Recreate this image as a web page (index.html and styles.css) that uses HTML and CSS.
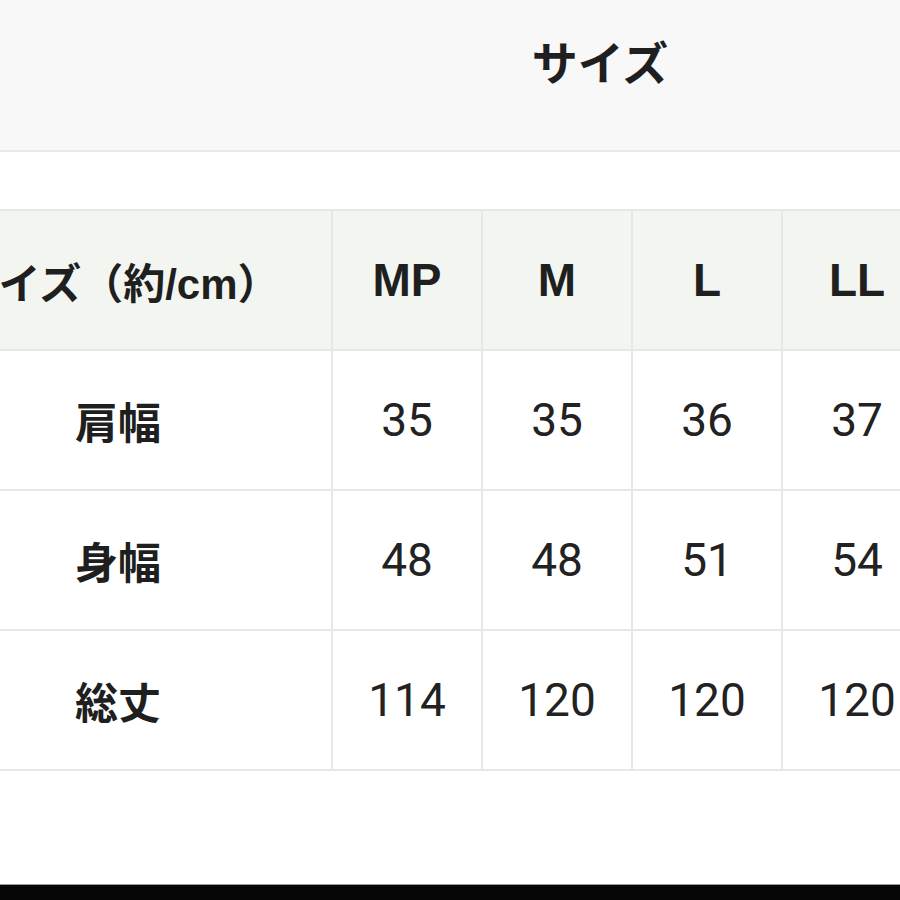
FILE: index.html
```html
<!DOCTYPE html>
<html lang="ja">
<head>
<meta charset="utf-8">
<link rel="stylesheet" href="styles.css">
</head>
<body>
<div class="page">
  <div class="title-bar"><span class="title">サイズ</span></div>
  <div class="table-wrap">
    <table class="size-table">
      <colgroup>
        <col class="c-label"><col class="c-size"><col class="c-size"><col class="c-size"><col class="c-size">
      </colgroup>
      <thead>
        <tr>
          <th class="label-head">サイズ（約/cm）</th>
          <th>MP</th><th>M</th><th>L</th><th>LL</th>
        </tr>
      </thead>
      <tbody>
        <tr><td class="label">肩幅</td><td>35</td><td>35</td><td>36</td><td>37</td></tr>
        <tr><td class="label">身幅</td><td>48</td><td>48</td><td>51</td><td>54</td></tr>
        <tr><td class="label">総丈</td><td>114</td><td>120</td><td>120</td><td>120</td></tr>
      </tbody>
    </table>
  </div>
  <div class="bottom-bar"></div>
</div>
</body>
</html>
```
FILE: styles.css
```css
html, body {
  margin: 0;
  padding: 0;
  background: #ffffff;
  overflow: hidden;
}
body {
  font-family: "Liberation Sans", "Noto Sans CJK JP", sans-serif;
  color: #1f1f1f;
}
.page {
  width: 900px;
  height: 900px;
  display: flex;
  flex-direction: column;
  overflow: hidden;
}
.title-bar {
  height: 152px;
  box-sizing: border-box;
  background: #f8f8f8;
  border-bottom: 2px solid #e8e8e8;
  display: flex;
  justify-content: center;
  align-items: flex-start;
  padding-left: 300px;
  padding-top: 36px;
  flex-shrink: 0;
}
.title {
  font-family: "Noto Sans CJK JP", sans-serif;
  font-weight: 700;
  font-size: 46px;
  line-height: 48px;
  color: #1f1f1f;
}
.table-wrap {
  margin-top: 57px;
  margin-left: -97px;
  flex-shrink: 0;
}
.size-table {
  border-collapse: collapse;
  table-layout: fixed;
  width: 1028px;
}
.c-label { width: 428px; }
.c-size { width: 150px; }
.size-table th,
.size-table td {
  height: 140px;
  box-sizing: border-box;
  border: 2px solid #e7e7e7;
  text-align: center;
  vertical-align: middle;
  padding: 0;
}
.size-table thead th {
  background: #f3f6f0;
  font-family: "Liberation Sans", "Noto Sans CJK JP", sans-serif;
  font-weight: 700;
  font-size: 46px;
  color: #1f1f1f;
}
.size-table thead th.label-head {
  font-size: 42px;
}
.size-table td {
  font-family: Roboto, "Liberation Sans", sans-serif;
  font-weight: 400;
  font-size: 46px;
  color: #222;
  background: #ffffff;
}
.size-table td.label {
  font-family: "Noto Sans CJK JP", sans-serif;
  font-weight: 700;
  font-size: 43px;
  color: #1f1f1f;
}
.bottom-bar {
  margin-top: auto;
  height: 15px;
  background: #050505;
  border-top: 1px solid #9a9a9a;
  flex-shrink: 0;
}
```
